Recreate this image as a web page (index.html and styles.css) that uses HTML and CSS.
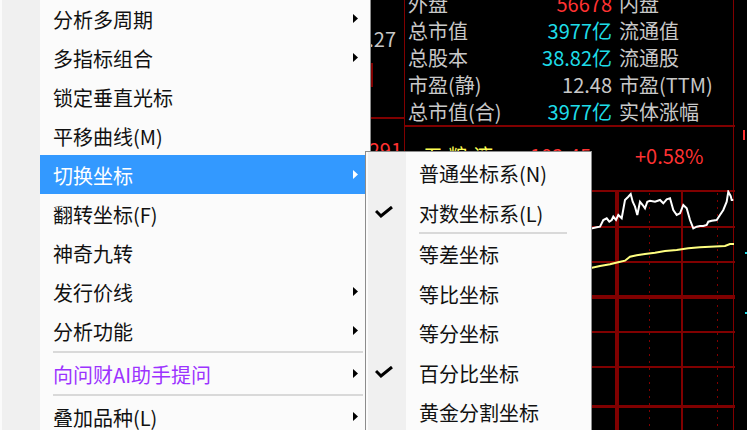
FILE: index.html
```html
<!DOCTYPE html>
<html lang="zh-CN">
<head>
<meta charset="utf-8">
<title>切换坐标</title>
<link rel="stylesheet" href="styles.css">
</head>
<body>
<div class="screen">
  <div class="left-col">
    <div class="lc-num">102.27</div>
    <div class="lc-bar"></div>
    <div class="lc-line"></div>
    <div class="lc-red">10291</div>
  </div>

  <div class="main">
    <div class="info">
      <div class="row"><div class="cell"><span class="lbl">外盘</span><span class="val red">56678</span></div><span class="lbl2">内盘</span></div>
      <div class="row"><div class="cell"><span class="lbl">总市值</span><span class="val cyan">3977亿</span></div><span class="lbl2">流通值</span></div>
      <div class="row"><div class="cell"><span class="lbl">总股本</span><span class="val cyan">38.82亿</span></div><span class="lbl2">流通股</span></div>
      <div class="row"><div class="cell"><span class="lbl">市盈(静)</span><span class="val">12.48</span></div><span class="lbl2">市盈(TTM)</span></div>
      <div class="row"><div class="cell"><span class="lbl">总市值(合)</span><span class="val cyan">3977亿</span></div><span class="lbl2">实体涨幅</span></div>
    </div>
    <div class="quote">
      <span class="q-name">五粮液</span>
      <span class="q-price">102.45</span>
      <span class="q-chg">+0.58%</span>
    </div>
    <svg class="chart" width="330" height="240" viewBox="405 190 330 240">
      <g fill="#800000">
        <rect x="405" y="190" width="330" height="2"/>
        <rect x="405" y="226" width="330" height="2"/>
        <rect x="405" y="261" width="330" height="2"/>
        <rect x="405" y="295" width="330" height="4"/>
        <rect x="405" y="331" width="330" height="2"/>
        <rect x="405" y="366" width="330" height="2"/>
        <rect x="405" y="405" width="330" height="3"/>
        <rect x="615" y="190" width="4" height="240"/>
        <rect x="681" y="190" width="2" height="240"/>
      </g>
      <g stroke="#800000" stroke-width="1" stroke-dasharray="2 5">
        <line x1="649.5" y1="193" x2="649.5" y2="430"/>
        <line x1="717.5" y1="193" x2="717.5" y2="430"/>
      </g>
      <polyline fill="none" stroke="#ffff80" stroke-width="2" points="560,270 592,267.7 600,266 610,264.3 618,262.3 625,260.7 630,256.7 636.7,255.3 645,254 655,252.7 665,251 676.7,250 688.3,248.3 700,247.3 710,246.7 725,246 730,244 734,244"/>
      <polyline fill="none" stroke="#ffffff" stroke-width="2" points="560,232 592.3,228.3 596.7,227.3 600,226.7 603.3,220 606.7,218.3 609.3,221.7 611.7,220 613.3,216.7 616,220 618.3,215 621.7,218.3 625,200 628.3,196.7 630.7,194 632.7,201.7 635,206.7 637.3,215 640,201.7 642.7,205 645,208.3 647.3,201.7 650,200.7 655,201.7 660,200 663.3,203.3 666.7,199.3 670,198.3 673.3,210 676.7,215 680,213.3 683.3,205 686.7,208.3 690,220 693.3,228.3 696.7,226.7 700,226 703.3,226 706.7,225 708.3,221.7 711.7,220.7 716.7,220 720,215 723.3,210 726.7,201.7 728.3,191.7 730.7,196 731.7,200 733.3,200"/>
    </svg>
  </div>

  <div class="right-strip">
    <span class="rs-red"></span>
    <span class="rs-cyan rs-c1"></span>
    <span class="rs-cyan rs-c2"></span>
  </div>

  <div class="menu">
    <div class="mi"><div class="gut"></div><div class="body"><span class="txt">分析多周期</span><svg class="arr" width="5" height="9" viewBox="0 0 5 9"><polygon points="0,0 5,4.5 0,9"/></svg></div></div>
    <div class="mi"><div class="gut"></div><div class="body"><span class="txt">多指标组合</span><svg class="arr" width="5" height="9" viewBox="0 0 5 9"><polygon points="0,0 5,4.5 0,9"/></svg></div></div>
    <div class="mi"><div class="gut"></div><div class="body"><span class="txt">锁定垂直光标</span></div></div>
    <div class="mi"><div class="gut"></div><div class="body"><span class="txt">平移曲线(M)</span></div></div>
    <div class="mi active"><div class="gut"></div><div class="body"><span class="txt">切换坐标</span><svg class="arr" width="5" height="9" viewBox="0 0 5 9"><polygon points="0,0 5,4.5 0,9"/></svg></div></div>
    <div class="mi"><div class="gut"></div><div class="body"><span class="txt">翻转坐标(F)</span></div></div>
    <div class="mi"><div class="gut"></div><div class="body"><span class="txt">神奇九转</span></div></div>
    <div class="mi"><div class="gut"></div><div class="body"><span class="txt">发行价线</span><svg class="arr" width="5" height="9" viewBox="0 0 5 9"><polygon points="0,0 5,4.5 0,9"/></svg></div></div>
    <div class="mi"><div class="gut"></div><div class="body"><span class="txt">分析功能</span><svg class="arr" width="5" height="9" viewBox="0 0 5 9"><polygon points="0,0 5,4.5 0,9"/></svg></div></div>
    <div class="sep"><div class="sep-line"></div></div>
    <div class="mi ai"><div class="gut"></div><div class="body"><span class="txt">向问财AI助手提问</span><svg class="arr" width="5" height="9" viewBox="0 0 5 9"><polygon points="0,0 5,4.5 0,9"/></svg></div></div>
    <div class="sep"><div class="sep-line"></div></div>
    <div class="mi"><div class="gut"></div><div class="body"><span class="txt">叠加品种(L)</span><svg class="arr" width="5" height="9" viewBox="0 0 5 9"><polygon points="0,0 5,4.5 0,9"/></svg></div></div>
  </div>

  <div class="menu submenu">
    <div class="mi"><div class="gut"></div><div class="body"><span class="txt">普通坐标系(N)</span></div></div>
    <div class="mi"><div class="gut"><svg class="chk" width="18" height="12" viewBox="0 0 18 12"><polyline points="1,5 6,10 17,1"/></svg></div><div class="body"><span class="txt">对数坐标系(L)</span></div></div>
    <div class="sep"><div class="sep-line"></div></div>
    <div class="mi"><div class="gut"></div><div class="body"><span class="txt">等差坐标</span></div></div>
    <div class="mi"><div class="gut"></div><div class="body"><span class="txt">等比坐标</span></div></div>
    <div class="mi"><div class="gut"></div><div class="body"><span class="txt">等分坐标</span></div></div>
    <div class="mi"><div class="gut"><svg class="chk" width="18" height="12" viewBox="0 0 18 12"><polyline points="1,5 6,10 17,1"/></svg></div><div class="body"><span class="txt">百分比坐标</span></div></div>
    <div class="mi"><div class="gut"></div><div class="body"><span class="txt">黄金分割坐标</span></div></div>
  </div>
</div>
</body>
</html>
```

FILE: styles.css
```css
* {
  box-sizing: border-box;
  margin: 0;
  padding: 0;
}

html, body {
  width: 747px;
  height: 430px;
  overflow: hidden;
  background: #000;
}

body {
  font-family: "Noto Sans CJK SC", "Microsoft YaHei", sans-serif;
  font-size: 20px;
}

.screen {
  position: relative;
  display: flex;
  width: 747px;
  height: 430px;
  overflow: hidden;
}

/* ---------- left column (mostly hidden under the menu) ---------- */
.left-col {
  flex: none;
  width: 404px;
  padding-left: 370px;
  display: flex;
  flex-direction: column;
  color: #c8c8c8;
}

.lc-num {
  margin-top: 25px;
  height: 27px;
  line-height: 27px;
  padding-right: 8px;
  text-align: right;
  white-space: nowrap;
  direction: rtl;
}

.lc-bar {
  margin-top: 11px;
  margin-left: 1px;
  width: 2px;
  height: 24px;
  background: #800000;
}

.lc-line {
  margin-top: 30px;
  height: 2px;
  background: #800000;
}

.lc-red {
  margin-top: 17px;
  height: 27px;
  line-height: 27px;
  padding-right: 2px;
  text-align: right;
  color: #ff3232;
  white-space: nowrap;
  direction: rtl;
}

/* ---------- main quote panel ---------- */
.main {
  flex: none;
  width: 331px;
  border-left: 1px solid #800000;
  display: flex;
  flex-direction: column;
  background: linear-gradient(to right, transparent 328px, #800000 328px, #800000 329px, transparent 329px);
}

.info {
  margin-top: -10px;
  padding-left: 3px;
  border-bottom: 2px solid #800000;
  color: #c8c8c8;
}

.row {
  display: flex;
  height: 27px;
  line-height: 27px;
  white-space: nowrap;
}

.cell {
  display: flex;
  width: 204px;
}

.lbl {
  flex: none;
}

.val {
  flex: 1;
  text-align: right;
}

.lbl2 {
  margin-left: 7px;
}

.red { color: #ff3232; }
.cyan { color: #1edce8; }

.quote {
  height: 63px;
  padding-top: 15px;
  display: flex;
  line-height: 27px;
  white-space: nowrap;
}

.q-name {
  margin-left: 18px;
  width: 100px;
  color: #ffff54;
  letter-spacing: 5px;
}

.q-price {
  width: 68px;
  text-align: right;
  color: #ff3232;
}

.q-chg {
  margin-left: 44px;
  color: #ff3232;
}

.chart {
  display: block;
}

/* ---------- right strip (cut-off values) ---------- */
.right-strip {
  flex: 1;
  display: flex;
  flex-direction: column;
  padding-left: 8px;
}

.rs-red {
  margin-top: 130px;
  width: 3px;
  height: 10px;
  border-left: 2px solid #ff3232;
}

.rs-cyan {
  width: 4px;
  height: 2px;
  margin-left: 2px;
  background: #1edce8;
}

.rs-c1 { margin-top: 112px; }
.rs-c2 { margin-top: 58px; }

/* ---------- popup menus ---------- */
.menu {
  position: absolute;
  left: -1px;
  top: -2px;
  width: 372px;
  padding-right: 2px;
  border: 1px solid #8c8c8c;
  background: linear-gradient(to right, #fbfbfb 0, #fbfbfb 2px, #f0f0f0 2px, #f0f0f0 40px, #fbfbfb 40px);
  color: #111;
  white-space: nowrap;
}

.submenu {
  left: 365px;
  top: 151px;
  width: 227px;
  height: 300px;
  padding-top: 1px;
}

.mi {
  display: flex;
  height: 39px;
}

.submenu .mi {
  height: 39.5px;
}

.gut {
  flex: none;
  width: 40px;
  display: flex;
  align-items: center;
}

.body {
  flex: 1;
  display: flex;
  align-items: center;
  padding-left: 13px;
  padding-right: 10px;
}

.txt {
  line-height: 27px;
  position: relative;
  top: 1px;
}

.arr {
  margin-left: auto;
  fill: #000;
}

.mi.active .body {
  background: #3399ff;
  color: #fff;
}

.mi.active .arr {
  fill: #fff;
}

.mi.ai .txt {
  color: #9c33ff;
}

.sep {
  height: 4px;
  padding: 1px 5px 0 53px;
}

.submenu .sep {
  height: 2px;
  padding: 0 22px 0 53px;
}

.sep-line {
  height: 2px;
  background: #d9d9d9;
}

.chk {
  margin-left: 9px;
  fill: none;
  stroke: #000;
  stroke-width: 3;
}
```
